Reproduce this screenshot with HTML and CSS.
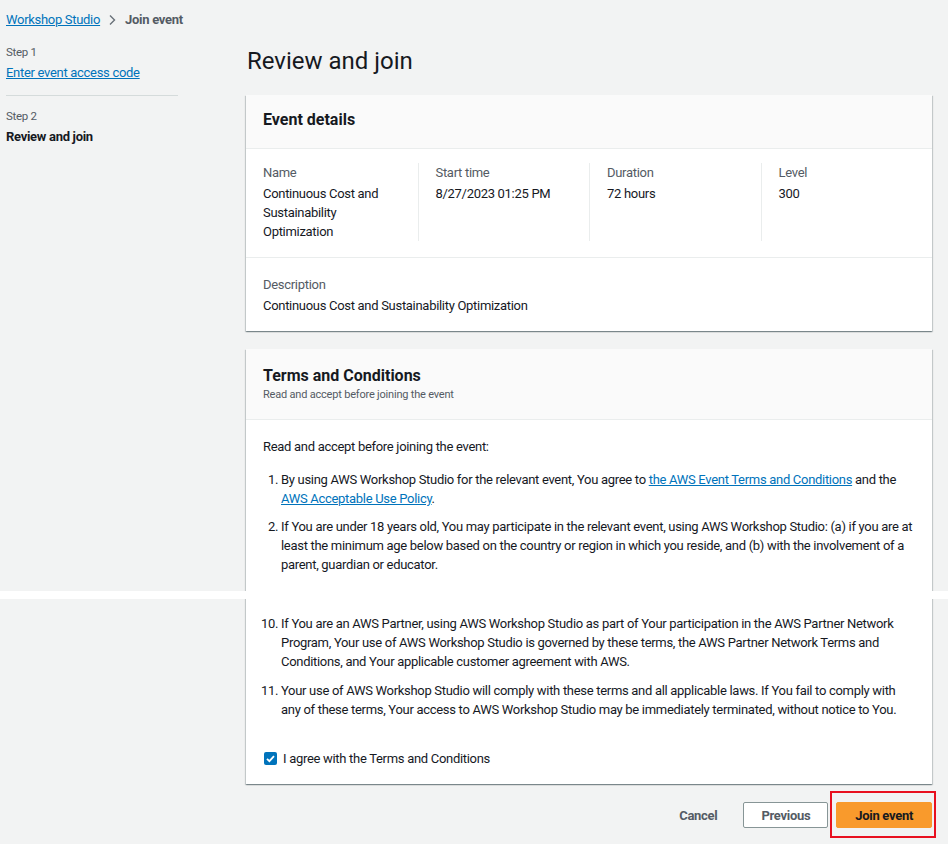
FILE: index.html
```html
<!DOCTYPE html>
<html lang="en">
<head>
<meta charset="utf-8">
<title>Join event - Workshop Studio</title>
<link rel="stylesheet" href="styles.css">
</head>
<body>
<nav class="breadcrumb">
  <a href="#" class="link">Workshop Studio</a>
  <svg class="crumb-sep" width="10" height="12" viewBox="0 0 10 12"><path d="M3 1.5l4.5 4.5L3 10.5" fill="none" stroke="#687078" stroke-width="1.4"/></svg>
  <span class="crumb-current">Join event</span>
</nav>
<div class="page">
  <aside class="steps">
    <div class="step">
      <div class="step-label">Step 1</div>
      <a href="#" class="link step-link">Enter event access code</a>
    </div>
    <div class="step step-active">
      <div class="step-label">Step 2</div>
      <div class="step-title">Review and join</div>
    </div>
  </aside>
  <main class="main">
    <h1 class="page-title">Review and join</h1>

    <section class="card">
      <header class="card-header">
        <h2 class="card-title">Event details</h2>
      </header>
      <div class="kv-columns">
        <div class="kv-col">
          <div class="kv-label">Name</div>
          <div class="kv-value">Continuous Cost and<br>Sustainability<br>Optimization</div>
        </div>
        <div class="kv-col">
          <div class="kv-label">Start time</div>
          <div class="kv-value">8/27/2023 01:25 PM</div>
        </div>
        <div class="kv-col">
          <div class="kv-label">Duration</div>
          <div class="kv-value">72 hours</div>
        </div>
        <div class="kv-col">
          <div class="kv-label">Level</div>
          <div class="kv-value">300</div>
        </div>
      </div>
      <div class="kv-desc">
        <div class="kv-label">Description</div>
        <div class="kv-value">Continuous Cost and Sustainability Optimization</div>
      </div>
    </section>

    <section class="card card-terms">
      <header class="card-header terms-header">
        <h2 class="card-title">Terms and Conditions</h2>
        <p class="card-sub">Read and accept before joining the event</p>
      </header>
      <div class="terms-body">
        <p class="terms-intro">Read and accept before joining the event:</p>
        <ol class="terms-list">
          <li>By using AWS Workshop Studio for the relevant event, You agree to <a href="#" class="link">the AWS Event Terms and Conditions</a> and the <a href="#" class="link">AWS Acceptable Use Policy</a>.</li>
          <li>If You are under 18 years old, You may participate in the relevant event, using AWS Workshop Studio: (a) if you are at least the minimum age below based on the country or region in which you reside, and (b) with the involvement of a parent, guardian or educator.</li>
        </ol>
        <ol class="terms-list terms-list-end" start="10">
          <li>If You are an AWS Partner, using AWS Workshop Studio as part of Your participation in the AWS Partner Network Program, Your use of AWS Workshop Studio is governed by these terms, the AWS Partner Network Terms and Conditions, and Your applicable customer agreement with AWS.</li>
          <li>Your use of AWS Workshop Studio will comply with these terms and all applicable laws. If You fail to comply with any of these terms, Your access to AWS Workshop Studio may be immediately terminated, without notice to You.</li>
        </ol>
        <label class="agree">
          <span class="checkbox"><svg width="13" height="13" viewBox="0 0 13 13"><path d="M3 6.8l2.4 2.4L10 4.2" fill="none" stroke="#fff" stroke-width="1.8"/></svg></span>
          <span>I agree with the Terms and Conditions</span>
        </label>
      </div>
    </section>

    <div class="actions">
      <button class="btn btn-link">Cancel</button>
      <button class="btn btn-normal">Previous</button>
      <span class="highlight"><button class="btn btn-primary">Join event</button></span>
    </div>
  </main>
</div>
<div class="stitch"></div>
</body>
</html>
```
FILE: styles.css
```css
* { box-sizing: border-box; }
body {
  margin: 0;
  background: #f2f3f3;
  color: #16191f;
  font-family: Roboto, "Liberation Sans", sans-serif;
  font-size: 13px;
  line-height: 19px;
  letter-spacing: -0.3px;
  position: relative;
  min-height: 844px;
}
.link { color: #0073bb; text-decoration: underline; }

.breadcrumb {
  display: flex;
  align-items: center;
  height: 19px;
  margin: 10px 0 0 6px;
}
.crumb-sep { margin: 0 8px 0 7px; }
.crumb-current { color: #545b64; font-weight: 700; }

.page {
  display: grid;
  grid-template-columns: 172px 1fr;
  column-gap: 68px;
  padding: 0 16px 0 6px;
}

.steps { padding-top: 15px; }
.step-label { font-size: 11.5px; line-height: 16px; color: #545b64; }
.step-link { display: block; margin-top: 3px; }
.step { padding-bottom: 13px; }
.step-active { border-top: 1px solid #d5dbdb; padding-top: 12px; }
.step-title { margin-top: 3px; font-weight: 700; }

.page-title {
  margin: 17px 0 0 1px;
  font-size: 24px;
  line-height: 30px;
  font-weight: 400;
  letter-spacing: 0;
}

.card {
  margin-top: 19px;
  background: #fff;
  box-shadow: 0 1px 1px 0 rgba(0,28,36,.3), 1px 1px 1px 0 rgba(0,28,36,.15), -1px 1px 1px 0 rgba(0,28,36,.15);
}
.card-terms { margin-top: 18px; }
.card-header {
  background: #fafafa;
  border-bottom: 1px solid #eaeded;
  padding: 14px 17px 17px;
}
.card-title {
  margin: 0;
  font-size: 16px;
  line-height: 22px;
  font-weight: 700;
  letter-spacing: 0;
}
.terms-header { padding: 16px 17px 16px; }
.card-sub {
  margin: 0;
  font-size: 11px;
  line-height: 16px;
  color: #545b64;
  letter-spacing: -0.2px;
}

.kv-columns {
  display: grid;
  grid-template-columns: repeat(4, 1fr);
  padding: 14px 0 0;
  margin-bottom: 16px;
}
.kv-col { padding: 0 17px; }
.kv-col + .kv-col { border-left: 1px solid #eaeded; }
.kv-label { color: #545b64; }
.kv-value { margin-top: 2px; }
.kv-desc {
  border-top: 1px solid #eaeded;
  padding: 17px 17px 16px;
}

.terms-body { padding: 17px 17px 16px; }
.terms-intro { margin: 0; }
.terms-list {
  margin: 14px 0 0;
  padding-left: 18px;
}
.terms-list li { margin-bottom: 9px; }
.terms-list li:last-child { margin-bottom: 0; }
.terms-list-end { margin-top: 40px; }
.terms-list-end li { margin-bottom: 10px; }

.agree {
  display: flex;
  align-items: center;
  margin-top: 30px;
  padding-left: 1px;
}
.checkbox {
  width: 13px;
  height: 13px;
  border-radius: 2px;
  background: #0073bb;
  margin-right: 6px;
  display: flex;
}

.actions {
  display: flex;
  justify-content: flex-end;
  align-items: center;
  gap: 8px;
  margin-top: 18px;
}
.btn {
  font-family: inherit;
  font-size: 13px;
  letter-spacing: -0.3px;
  font-weight: 700;
  height: 26px;
  padding: 0 17px;
  border-radius: 2px;
  border: 1px solid transparent;
  cursor: pointer;
}
.btn-link { background: transparent; color: #545b64; }
.btn-normal { background: #fff; color: #545b64; border-color: #879596; }
.btn-primary { background: #f99a2c; border-color: #f99a2c; color: #16191f; padding: 0 18px; }
.highlight {
  display: flex;
  border: 2px solid #e8101f;
  padding: 9px 2px 8px 4px;
  margin: -11px -4px -10px -6px;
}

.stitch {
  position: absolute;
  left: 0;
  right: 0;
  top: 591px;
  height: 8px;
  background: #fff;
}
```
